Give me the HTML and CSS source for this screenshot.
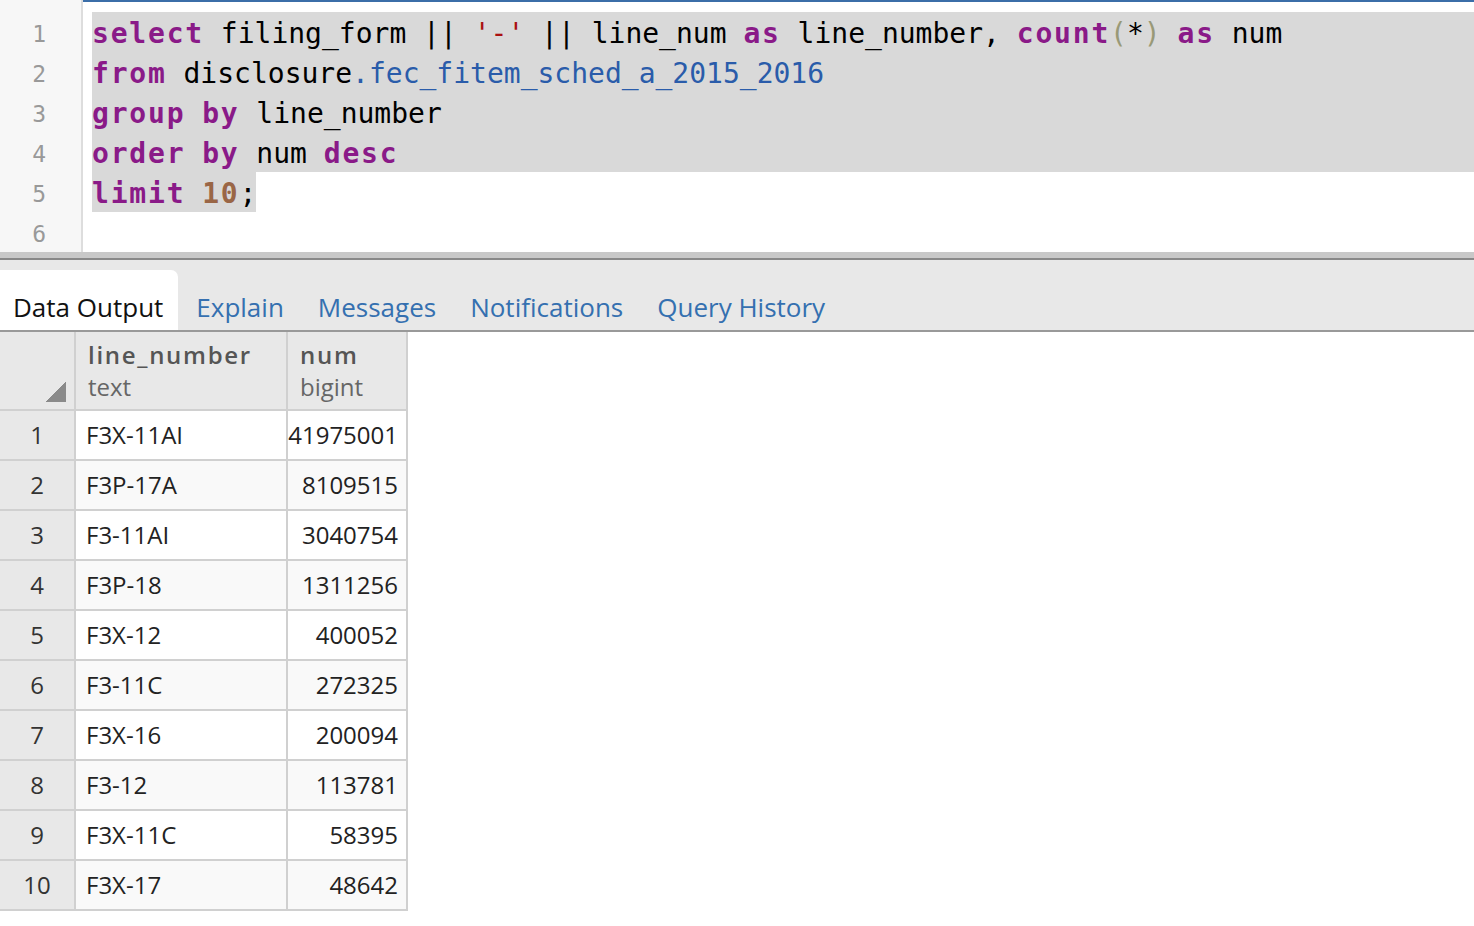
FILE: index.html
```html
<!DOCTYPE html>
<html>
<head>
<meta charset="utf-8">
<link rel="stylesheet" href="styles.css">
</head>
<body>
<div class="editor">
  <div class="gutter">
    <div class="ln">1</div>
    <div class="ln">2</div>
    <div class="ln">3</div>
    <div class="ln">4</div>
    <div class="ln">5</div>
    <div class="ln">6</div>
  </div>
  <div class="code">
    <div class="line sel"><span class="k">select</span> filing_form || <span class="s">'-'</span> || line_num <span class="k">as</span> line_number, <span class="k">count</span><span class="b">(</span>*<span class="b">)</span> <span class="k">as</span> num</div>
    <div class="line sel"><span class="k">from</span> disclosure<span class="v">.fec_fitem_sched_a_2015_2016</span></div>
    <div class="line sel"><span class="k">group</span> <span class="k">by</span> line_number</div>
    <div class="line sel"><span class="k">order</span> <span class="k">by</span> num <span class="k">desc</span></div>
    <div class="line"><span class="selpart"><span class="k">limit</span> <span class="n">10</span>;</span></div>
    <div class="line"> </div>
  </div>
</div>
<div class="divider"></div>
<div class="tabs">
  <div class="tab active">Data Output</div>
  <div class="tab">Explain</div>
  <div class="tab">Messages</div>
  <div class="tab">Notifications</div>
  <div class="tab">Query History</div>
</div>
<table class="grid">
  <thead>
    <tr>
      <th class="corner"><span class="tri"></span></th>
      <th class="col2"><div class="cname">line_number</div><div class="ctype">text</div></th>
      <th class="col3"><div class="cname">num</div><div class="ctype">bigint</div></th>
    </tr>
  </thead>
  <tbody>
    <tr><td class="rn">1</td><td class="txt">F3X-11AI</td><td class="num">41975001</td></tr>
    <tr><td class="rn">2</td><td class="txt">F3P-17A</td><td class="num">8109515</td></tr>
    <tr><td class="rn">3</td><td class="txt">F3-11AI</td><td class="num">3040754</td></tr>
    <tr><td class="rn">4</td><td class="txt">F3P-18</td><td class="num">1311256</td></tr>
    <tr><td class="rn">5</td><td class="txt">F3X-12</td><td class="num">400052</td></tr>
    <tr><td class="rn">6</td><td class="txt">F3-11C</td><td class="num">272325</td></tr>
    <tr><td class="rn">7</td><td class="txt">F3X-16</td><td class="num">200094</td></tr>
    <tr><td class="rn">8</td><td class="txt">F3-12</td><td class="num">113781</td></tr>
    <tr><td class="rn">9</td><td class="txt">F3X-11C</td><td class="num">58395</td></tr>
    <tr><td class="rn">10</td><td class="txt">F3X-17</td><td class="num">48642</td></tr>
  </tbody>
</table>
</body>
</html>
```
FILE: styles.css
```css
html, body {
  margin: 0;
  padding: 0;
  background: #ffffff;
}

body {
  width: 1474px;
  height: 926px;
  overflow: hidden;
  font-family: "Open Sans", "Liberation Sans", sans-serif;
}

.editor {
  display: flex;
  height: 252px;
  background: #ffffff;
}

.gutter {
  width: 81px;
  flex: none;
  background: #f7f7f7;
  border-right: 2px solid #dddddd;
  padding-top: 12px;
  box-sizing: content-box;
}

.ln {
  height: 40px;
  line-height: 44px;
  text-align: right;
  padding-right: 35px;
  font-family: "DejaVu Sans Mono", monospace;
  font-size: 23px;
  color: #999999;
}

.code {
  flex: 1;
  border-top: 2px solid #3b6ea8;
  padding-top: 10px;
  padding-left: 9px;
  font-family: "DejaVu Sans Mono", monospace;
  font-size: 28px;
  color: #000000;
}

.line {
  height: 40px;
  line-height: 44px;
  white-space: pre;
}

.sel, .selpart {
  background: #d9d9d9;
}

.selpart {
  display: inline-block;
  height: 40px;
  vertical-align: top;
}

.k {
  color: #8a1a88;
  font-weight: bold;
  letter-spacing: 1.8px;
}

.n {
  color: #9a6646;
  font-weight: bold;
  letter-spacing: 1.8px;
}

.s {
  color: #aa1111;
}

.v {
  color: #2a5caa;
}

.b {
  color: #999977;
}

.divider {
  height: 6px;
  background: #c8c8c8;
  border-bottom: 2px solid #888888;
}

.tabs {
  display: flex;
  align-items: flex-end;
  height: 70px;
  background: #e8e8e8;
  border-bottom: 2px solid #999999;
}

.tab {
  height: 60px;
  box-sizing: border-box;
  padding: 19px 16px 0 18px;
  font-size: 26px;
  line-height: 36px;
  color: #3570b0;
}

.tab.active {
  background: #ffffff;
  color: #111111;
  padding-left: 13px;
  padding-right: 15px;
  border-top-right-radius: 7px;
}

.grid {
  border-collapse: separate;
  border-spacing: 0;
  font-size: 24px;
  color: #222222;
}

.grid th, .grid td {
  padding: 0;
  border-right: 2px solid #d0d0d0;
  border-bottom: 2px solid #d0d0d0;
}

.grid th {
  background: #e8e8e8;
  height: 79px;
  vertical-align: top;
  text-align: left;
  font-weight: normal;
  padding-top: 7px;
  padding-left: 12px;
  box-sizing: border-box;
}

.grid th.corner {
  width: 76px;
  padding: 0;
  position: relative;
}

.tri {
  position: absolute;
  right: 8px;
  bottom: 7px;
  width: 20px;
  height: 20px;
  background: linear-gradient(135deg, transparent 50%, #8a8a8a 50%);
}

.grid th.col2 {
  width: 212px;
}

.grid th.col3 {
  width: 120px;
}

.cname {
  font-weight: 600;
  color: #555555;
  letter-spacing: 1.7px;
  line-height: 32px;
}

.ctype {
  color: #666666;
  line-height: 32px;
}

.grid td {
  height: 48px;
  line-height: 48px;
  box-sizing: content-box;
  background: #ffffff;
}

.grid tbody tr:nth-child(even) td {
  background: #f9f9f9;
}

.grid td.rn {
  background: #e8e8e8;
  text-align: center;
  color: #333333;
}

.grid tbody tr:nth-child(even) td.rn {
  background: #e8e8e8;
}

.grid td.txt {
  padding-left: 10px;
}

.grid td.num {
  text-align: right;
  padding-right: 8px;
  white-space: nowrap;
}
```
